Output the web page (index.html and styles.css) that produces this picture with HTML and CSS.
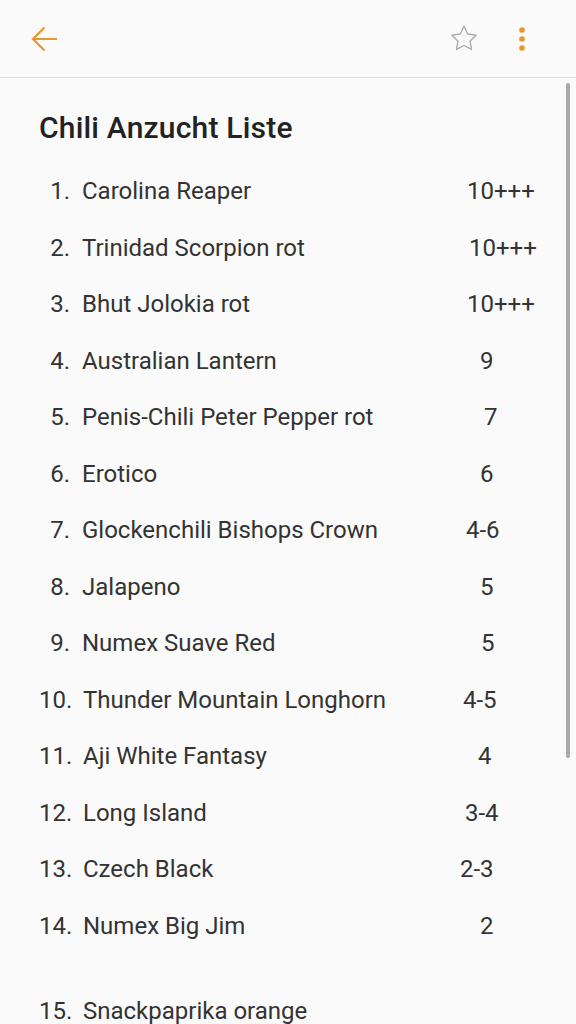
FILE: index.html
```html
<!DOCTYPE html>
<html lang="de">
<head>
    <meta charset="UTF-8">
    <meta name="viewport" content="width=device-width, initial-scale=1.0">
    <title>Chili Anzucht Liste</title>
    <link rel="stylesheet" href="styles.css">
</head>
<body>
    <header class="toolbar">
        <button class="icon-btn back" aria-label="Zurück">
            <svg width="28" height="26" viewBox="0 0 28 26"><path d="M27 13H3 M14.5 1.5 L3 13 L14.5 24.5" fill="none" stroke="#e8962d" stroke-width="2.2"/></svg>
        </button>
        <div class="spacer"></div>
        <button class="icon-btn star" aria-label="Favorit">
            <svg width="30" height="29" viewBox="0 0 24 24"><polygon points="12,2 15.09,8.26 22,9.27 17,14.14 18.18,21.02 12,17.77 5.82,21.02 7,14.14 2,9.27 8.91,8.26" fill="none" stroke="#a9a9a9" stroke-width="1.1" stroke-linejoin="round"/></svg>
        </button>
        <button class="icon-btn more" aria-label="Mehr">
            <svg width="8" height="26" viewBox="0 0 8 26"><circle cx="4" cy="4" r="2.8" fill="#e8962d"/><circle cx="4" cy="13" r="2.8" fill="#e8962d"/><circle cx="4" cy="22" r="2.8" fill="#e8962d"/></svg>
        </button>
    </header>

    <main class="note">
        <h1 class="note-title">Chili Anzucht Liste</h1>
        <div class="list">
            <div class="row"><span class="num">1.</span><span class="name">Carolina Reaper</span><span class="val" style="margin-left:9px">10+++</span></div>
            <div class="row"><span class="num">2.</span><span class="name">Trinidad Scorpion rot</span><span class="val" style="margin-left:11px">10+++</span></div>
            <div class="row"><span class="num">3.</span><span class="name">Bhut Jolokia rot</span><span class="val" style="margin-left:9px">10+++</span></div>
            <div class="row"><span class="num">4.</span><span class="name">Australian Lantern</span><span class="val" style="margin-left:22px">9</span></div>
            <div class="row"><span class="num">5.</span><span class="name">Penis-Chili Peter Pepper rot</span><span class="val" style="margin-left:26px">7</span></div>
            <div class="row"><span class="num">6.</span><span class="name">Erotico</span><span class="val" style="margin-left:22px">6</span></div>
            <div class="row"><span class="num">7.</span><span class="name">Glockenchili Bishops Crown</span><span class="val" style="margin-left:8px">4-6</span></div>
            <div class="row"><span class="num">8.</span><span class="name">Jalapeno</span><span class="val" style="margin-left:22px">5</span></div>
            <div class="row"><span class="num">9.</span><span class="name">Numex Suave Red</span><span class="val" style="margin-left:23px">5</span></div>
            <div class="row wide"><span class="num">10.</span><span class="name">Thunder Mountain Longhorn</span><span class="val" style="margin-left:5px">4-5</span></div>
            <div class="row wide"><span class="num">11.</span><span class="name">Aji White Fantasy</span><span class="val" style="margin-left:20px">4</span></div>
            <div class="row wide"><span class="num">12.</span><span class="name">Long Island</span><span class="val" style="margin-left:7px">3-4</span></div>
            <div class="row wide"><span class="num">13.</span><span class="name">Czech Black</span><span class="val" style="margin-left:2px">2-3</span></div>
            <div class="row wide"><span class="num">14.</span><span class="name">Numex Big Jim</span><span class="val" style="margin-left:22px">2</span></div>
            <div class="blank"></div>
            <div class="row wide"><span class="num">15.</span><span class="name">Snackpaprika orange</span><span class="val"></span></div>
        </div>
    </main>

    <div class="scrollbar"></div>
</body>
</html>
```

FILE: styles.css
```css
body {
    font-family: Roboto, "Noto Sans", sans-serif;
    margin: 0;
    padding: 0;
    background-color: #fafafa;
    color: #333333;
    overflow: hidden;
}
.toolbar {
    display: flex;
    align-items: center;
    height: 77px;
    padding: 0 50px 0 30px;
    border-bottom: 1px solid #dcdcdc;
}
.spacer {
    flex: 1;
}
.icon-btn {
    display: flex;
    align-items: center;
    padding: 0;
    margin: 0;
    background: none;
    border: none;
    cursor: pointer;
}
.star {
    margin-right: 39px;
}
.note {
    padding: 30px 16px 0 39px;
}
.note-title {
    margin: 0;
    font-size: 30px;
    font-weight: 500;
    line-height: 40px;
    color: #222222;
    letter-spacing: 0.2px;
}
.list {
    margin-top: 15px;
    font-size: 24px;
}
.row {
    display: grid;
    grid-template-columns: 31px 361px auto;
    column-gap: 12px;
    line-height: 56.5px;
    white-space: nowrap;
}
.row.wide {
    grid-template-columns: 31px 359px auto;
    column-gap: 13px;
}
.num {
    text-align: right;
}
.val {
    padding-left: 3px;
}
.blank {
    height: 28.5px;
}
.scrollbar {
    position: absolute;
    top: 83px;
    right: 6px;
    width: 4px;
    height: 675px;
    border-radius: 2px;
    background-color: #ababab;
}
```
